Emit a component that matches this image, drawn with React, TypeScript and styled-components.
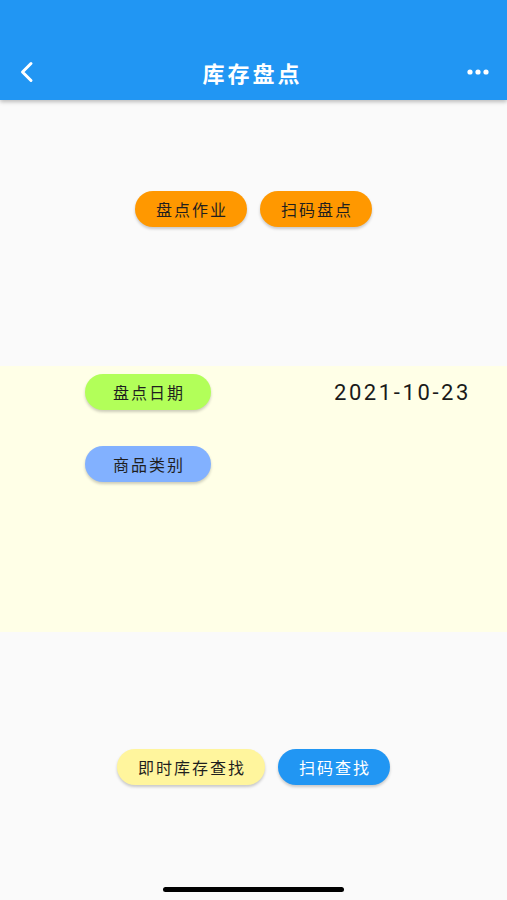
import * as React from "react";
import styled, { createGlobalStyle } from "styled-components";

const GlobalStyle = createGlobalStyle`
  html, body {
    margin: 0;
    padding: 0;
    background: #fafafa;
    font-family: "Noto Sans CJK SC", "Noto Sans", sans-serif;
  }
`;

const Page = styled.div`
  width: 507px;
  height: 900px;
  display: flex;
  flex-direction: column;
  background: #fafafa;
  overflow: hidden;
`;

const AppBar = styled.header`
  height: 100px;
  flex-shrink: 0;
  background: #2196f3;
  box-shadow: 0 2px 4px rgba(0, 0, 0, 0.25);
  display: flex;
  align-items: flex-end;
  padding: 0 12px 12px 10px;
  box-sizing: border-box;
  position: relative;
  z-index: 1;
`;

const BarButton = styled.div`
  width: 34px;
  height: 32px;
  display: flex;
  align-items: center;
  justify-content: center;
`;

const Title = styled.h1`
  flex: 1;
  margin: 0;
  text-align: center;
  color: #fff;
  font-size: 22px;
  font-weight: 700;
  letter-spacing: 3px;
  line-height: 32px;
`;

const Section = styled.section<{ $height: number; $top: number; $bg?: string }>`
  height: ${(p) => p.$height}px;
  padding-top: ${(p) => p.$top}px;
  box-sizing: border-box;
  background: ${(p) => p.$bg || "transparent"};
  flex-shrink: 0;
`;

const CenterRow = styled.div`
  display: flex;
  justify-content: center;
  gap: 13px;
`;

const InfoRow = styled.div`
  display: flex;
  align-items: center;
  justify-content: space-between;
  padding: 0 36px 0 85px;
  margin-bottom: 36px;
`;

const Pill = styled.button<{ $bg: string; $fg?: string; $width?: number }>`
  height: 36px;
  border: none;
  border-radius: 18px;
  padding: 0 19px 0 21px;
  ${(p) => (p.$width ? `width: ${p.$width}px;` : "")}
  background: ${(p) => p.$bg};
  color: ${(p) => p.$fg || "#1f1f1f"};
  font-family: "Noto Sans CJK SC", sans-serif;
  font-size: 16px;
  font-weight: 400;
  letter-spacing: 2px;
  box-shadow: 0 2px 3px rgba(0, 0, 0, 0.2);
  display: flex;
  align-items: center;
  justify-content: center;
`;

const DateText = styled.span`
  font-family: Roboto, "Noto Sans", sans-serif;
  font-size: 22px;
  letter-spacing: 2.6px;
  color: #1a1a1a;
`;

const HomeBar = styled.div`
  margin-top: auto;
  margin-bottom: 8px;
  align-self: center;
  width: 181px;
  height: 5px;
  border-radius: 3px;
  background: #000;
`;

export default function App() {
  return (
    <Page>
      <GlobalStyle />
      <AppBar>
        <BarButton>
          <svg width="22" height="24" viewBox="0 0 22 24">
            <polyline
              points="15,3.5 6.5,12 15,20.5"
              fill="none"
              stroke="#fff"
              strokeWidth="3"
              strokeLinecap="round"
              strokeLinejoin="round"
            />
          </svg>
        </BarButton>
        <Title>库存盘点</Title>
        <BarButton>
          <svg width="24" height="8" viewBox="0 0 24 8">
            <circle cx="4" cy="4" r="2.6" fill="#fff" />
            <circle cx="12" cy="4" r="2.6" fill="#fff" />
            <circle cx="20" cy="4" r="2.6" fill="#fff" />
          </svg>
        </BarButton>
      </AppBar>
      <Section $height={266} $top={91}>
        <CenterRow>
          <Pill $bg="#ff9800">盘点作业</Pill>
          <Pill $bg="#ff9800">扫码盘点</Pill>
        </CenterRow>
      </Section>
      <Section $height={266} $top={8} $bg="#ffffe7">
        <InfoRow>
          <Pill $bg="#b2ff59" $width={126}>盘点日期</Pill>
          <DateText>2021-10-23</DateText>
        </InfoRow>
        <InfoRow>
          <Pill $bg="#82b1ff" $width={126}>商品类别</Pill>
        </InfoRow>
      </Section>
      <Section $height={0} $top={117}>
        <CenterRow>
          <Pill $bg="#fff59d">即时库存查找</Pill>
          <Pill $bg="#2196f3" $fg="#fff">扫码查找</Pill>
        </CenterRow>
      </Section>
      <HomeBar />
    </Page>
  );
}
